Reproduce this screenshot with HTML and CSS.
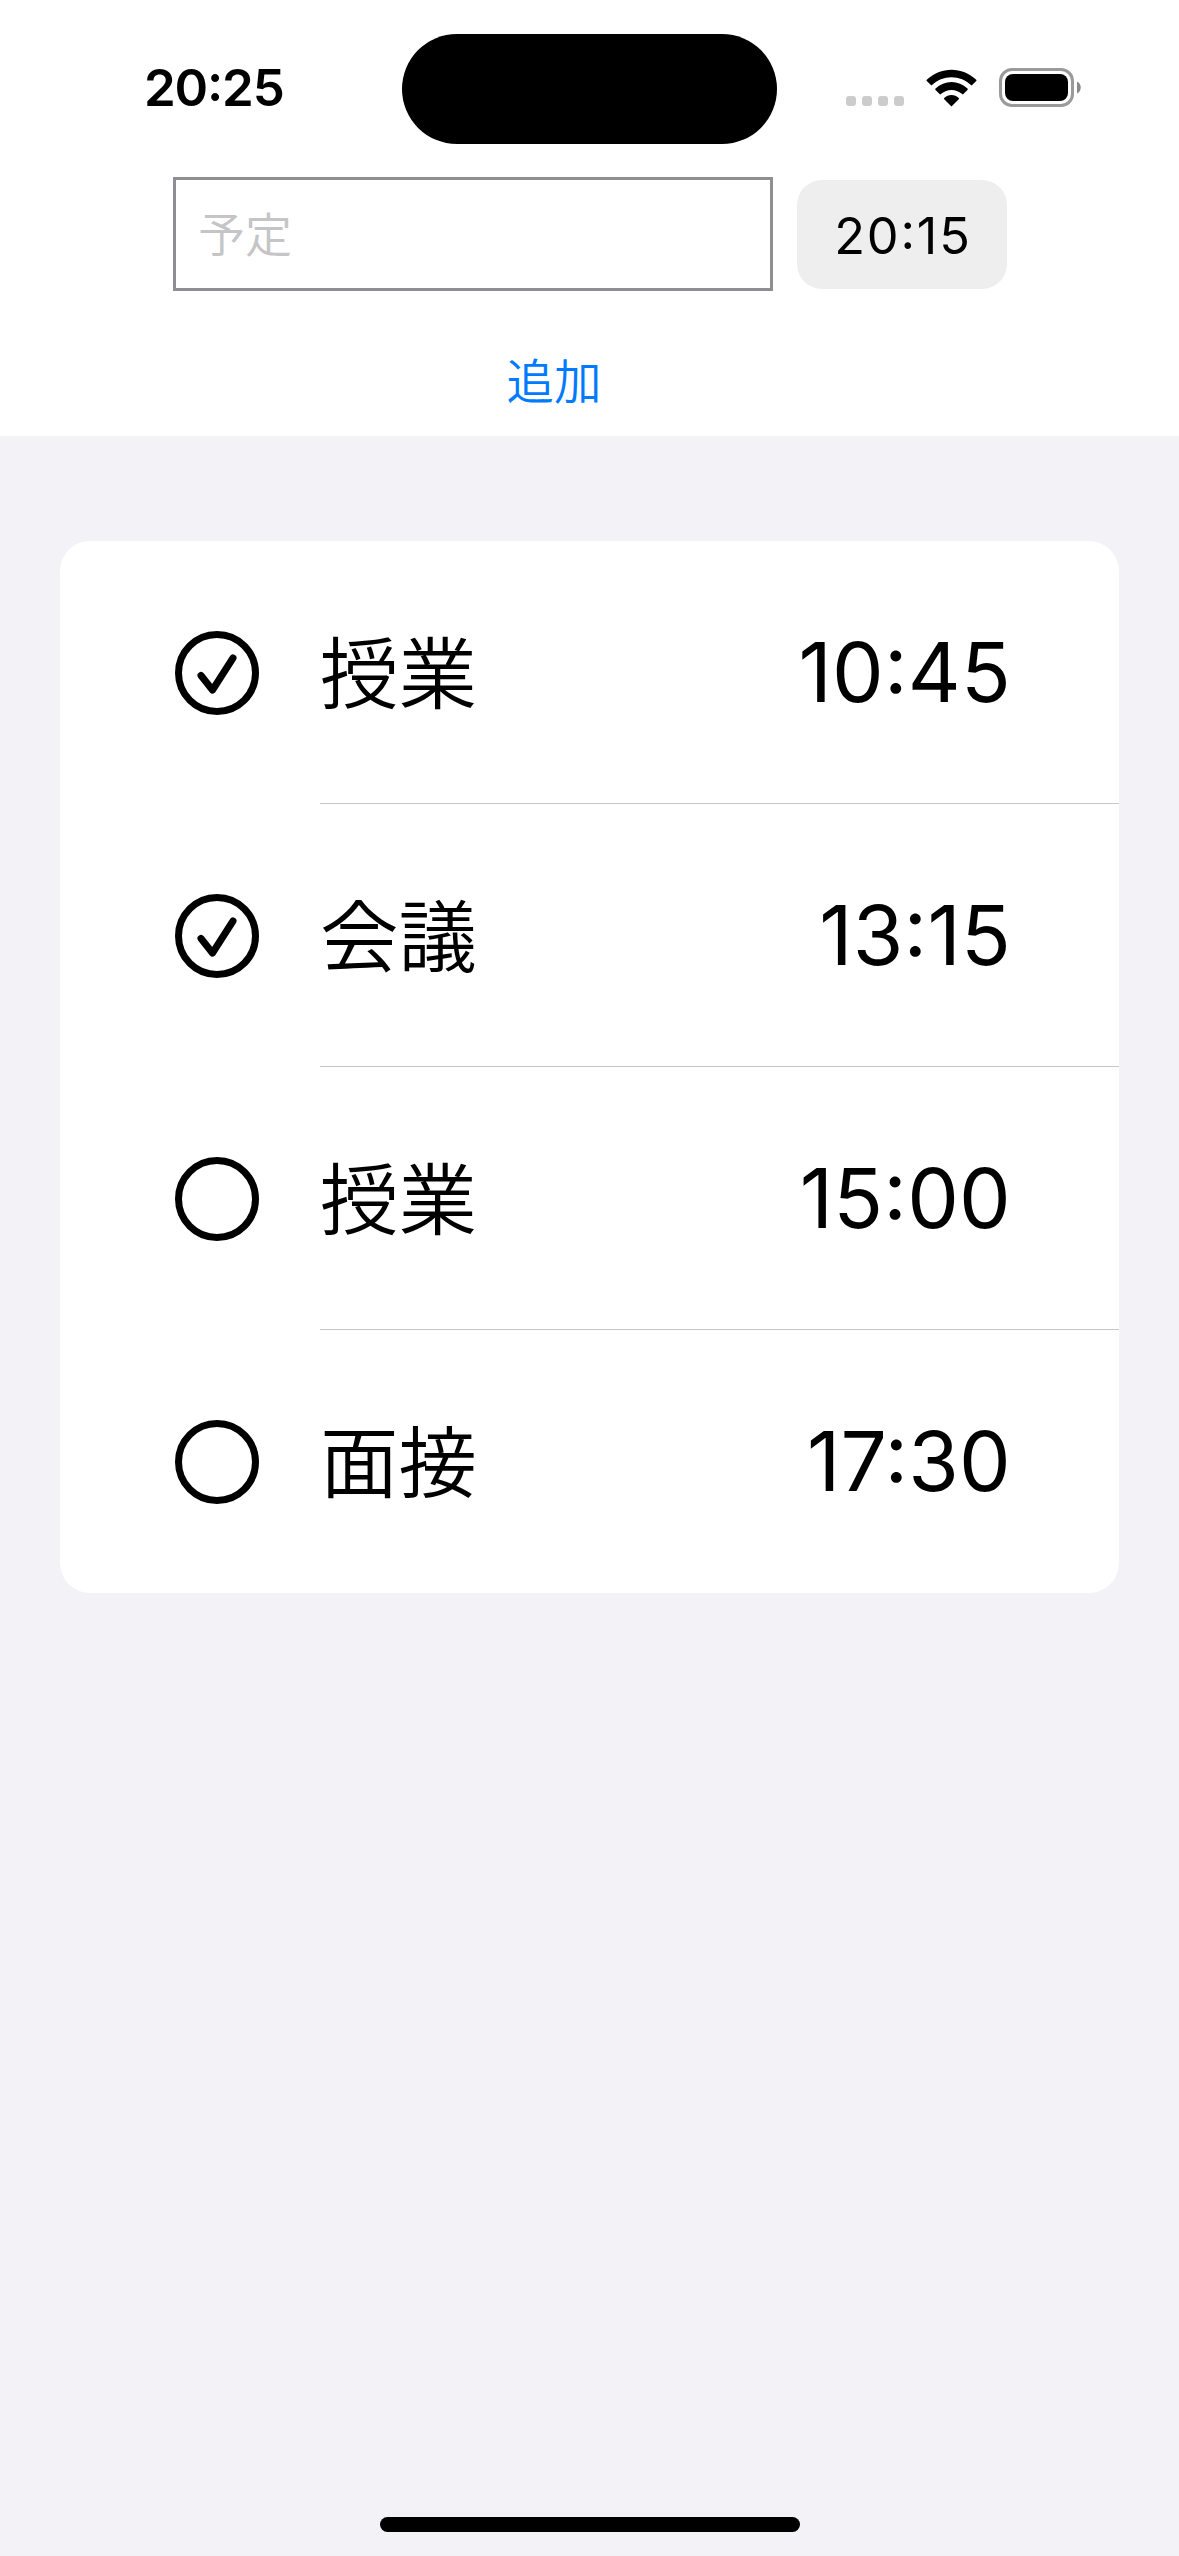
FILE: index.html
```
<!DOCTYPE html>
<html lang="ja">
<head>
<meta charset="utf-8">
<title>予定</title>
<link rel="stylesheet" href="styles.css">
</head>
<body>
<div class="screen">
  <div class="status">
    <span class="clock">20:25</span>
    <div class="island"></div>
    <div class="indicators">
      <div class="signal"><i></i><i></i><i></i><i></i></div>
      <svg class="wifi" width="51" height="38" viewBox="0 0 52 38" preserveAspectRatio="none">
        <path d="M26 37.5 18.6 30.2a.8.8 0 0 1 0-1.2C22.6 25.1 29.4 25.1 33.4 29a.8.8 0 0 1 0 1.2Z"/>
        <path d="M14.4 25.6 9.7 20.9a.9.9 0 0 1 0-1.3C18.7 10.9 33.3 10.9 42.3 19.6a.9.9 0 0 1 0 1.3L37.6 25.6C31 19.3 21 19.3 14.4 25.6Z"/>
        <path d="M5.5 16.6.8 12a.9.9 0 0 1 0-1.3C14.900-2.7 37.100-2.7 51.200 10.7a.9.9 0 0 1 0 1.300L46.500 16.600C35 5.300 17 5.300 5.500 16.600Z"/>
      </svg>
      <svg class="battery" width="83" height="39" viewBox="0 0 83 39">
        <rect x="1.500" y="1.500" width="72" height="36" rx="11.500" fill="none" stroke="#9a9a9a" stroke-width="3"/>
        <rect x="6" y="6" width="63" height="27" rx="8"/>
        <path d="M78 13.500C83 15.500 83 23.500 78 25.500Z" fill="#8a8a8a"/>
      </svg>
    </div>
  </div>
  <header class="form">
    <div class="inputs">
      <div class="field">予定</div>
      <div class="picker">20:15</div>
    </div>
    <div class="add">追加</div>
  </header>
  <main class="list">
    <div class="row">
      <svg class="mark" viewBox="0 0 84 84"><circle cx="42" cy="42" r="38.500"/><path d="M26 44.500 37.500 59 58 27"/></svg>
      <div class="cell"><span class="name">授業</span><span class="time">10:45</span></div>
    </div>
    <div class="row">
      <svg class="mark" viewBox="0 0 84 84"><circle cx="42" cy="42" r="38.500"/><path d="M26 44.500 37.500 59 58 27"/></svg>
      <div class="cell"><span class="name">会議</span><span class="time">13:15</span></div>
    </div>
    <div class="row">
      <svg class="mark" viewBox="0 0 84 84"><circle cx="42" cy="42" r="38.500"/></svg>
      <div class="cell"><span class="name">授業</span><span class="time">15:00</span></div>
    </div>
    <div class="row">
      <svg class="mark" viewBox="0 0 84 84"><circle cx="42" cy="42" r="38.500"/></svg>
      <div class="cell"><span class="name">面接</span><span class="time">17:30</span></div>
    </div>
  </main>
  <div class="home"></div>
</div>
</body>
</html>
```
FILE: styles.css
```
* { box-sizing: border-box; }
body {
  margin: 0;
  font-family: Inter, "Noto Sans CJK JP", sans-serif;
  color: #000;
}
.clock, .picker, .time { font-feature-settings: "calt" 1, "case" 1; }
.screen {
  width: 1179px;
  height: 2556px;
  display: flex;
  flex-direction: column;
  background: #f2f2f7;
}
.status {
  height: 177px;
  padding-top: 34px;
  display: grid;
  grid-template-columns: 402px 375px 402px;
  align-items: start;
  background: #fff;
}
.clock {
  padding-left: 144px;
  font-size: 51px;
  font-weight: 600;
  line-height: 108px;
  letter-spacing: -1.2px;
}
.island {
  height: 110px;
  border-radius: 55px;
  background: #000;
}
.indicators {
  height: 107px;
  padding-left: 69px;
  display: flex;
  align-items: center;
}
.signal {
  display: flex;
  gap: 6px;
  padding-top: 27px;
  margin-right: 22px;
}
.signal i {
  width: 10px;
  height: 10px;
  border-radius: 3px;
  background: #ccc;
}
.wifi { margin-right: 22px; }
.form {
  height: 259px;
  padding-left: 173px;
  background: #fff;
}
.inputs {
  display: flex;
  align-items: center;
  gap: 24px;
}
.field {
  width: 600px;
  height: 114px;
  padding-left: 22px;
  border: 3px solid #8e8e93;
  color: #c5c5c7;
  font-family: "Noto Sans CJK JP", sans-serif;
  font-weight: 350;
  font-size: 47px;
  line-height: 103px;
}
.picker {
  width: 210px;
  height: 109px;
  padding-left: 2px;
  border-radius: 25px;
  background: #eeeeef;
  font-size: 50.5px;
  letter-spacing: 1.8px;
  line-height: 111px;
  text-align: center;
}
.add {
  width: 762px;
  padding-top: 43px;
  text-align: center;
  color: #007aff;
  font-family: "Noto Sans CJK JP", sans-serif;
  font-weight: 350;
  font-size: 47.5px;
  line-height: 90px;
}
.list {
  margin: 105px 60px 0;
  border-radius: 30px;
  background: #fff;
}
.row {
  height: 263px;
  padding-left: 115px;
  display: flex;
  align-items: center;
}
.mark {
  width: 84px;
  height: 84px;
  margin-right: 61px;
  fill: none;
  stroke: #000;
  stroke-width: 7;
  stroke-linecap: round;
  stroke-linejoin: round;
}
.cell {
  flex: 1;
  height: 263px;
  padding-right: 108px;
  display: flex;
  align-items: center;
  justify-content: space-between;
  border-bottom: 1px solid #c6c6c8;
}
.row:last-child .cell { border-bottom: 0; }
.name {
  padding-bottom: 7px;
  font-family: "Noto Sans CJK JP", sans-serif;
  font-weight: 350;
  font-size: 78.5px;
}
.time {
  font-size: 82px;
  letter-spacing: 0.2px;
}
.home {
  width: 420px;
  height: 15px;
  margin: auto auto 24px 380px;
  border-radius: 8px;
  background: #000;
}
```
